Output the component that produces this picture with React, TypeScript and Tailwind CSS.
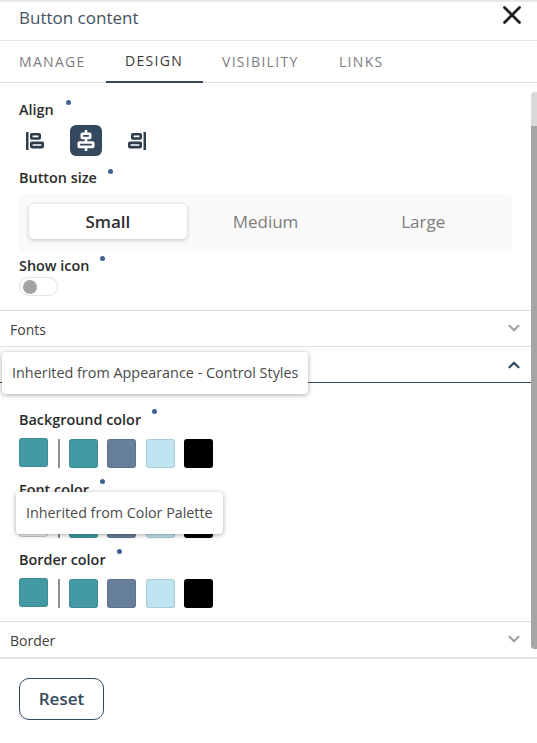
import React from 'react';
import { X, ChevronDown, ChevronUp } from 'lucide-react';

const swatches = ['bg-[#439aa3]', 'bg-[#687f9b]', 'bg-[#bfe3ef]', 'bg-[#000000]'];

function Label({ text, dotClass }: { text: string; dotClass: string }) {
  return (
    <div className="relative h-[20px] text-[14.4px] leading-[20px] font-semibold text-[#2b2b2b]">
      {text}
      <span className={`absolute w-[5px] h-[5px] rounded-full bg-[#3f6391] ${dotClass}`}></span>
    </div>
  );
}

function AlignLeftIcon() {
  return (
    <svg width="18" height="20" viewBox="0 0 18 20" fill="none" stroke="#2e3d4c" strokeWidth="2.6">
      <path d="M1.2 1v18" />
      <rect x="5.3" y="3.3" width="8.4" height="4.2" rx="0.5" />
      <rect x="5.3" y="11.9" width="11.4" height="4.2" rx="0.5" />
    </svg>
  );
}

function AlignCenterIcon() {
  return (
    <svg width="18" height="22" viewBox="0 0 18 22" fill="none" stroke="#ffffff" strokeWidth="2.6">
      <path d="M9 0v3M9 9v3M9 18v3" />
      <rect x="4.8" y="3.8" width="8.4" height="4.2" rx="0.5" />
      <rect x="1.8" y="12.5" width="14.4" height="4.4" rx="0.5" />
    </svg>
  );
}

function AlignRightIcon() {
  return (
    <svg width="18" height="20" viewBox="0 0 18 20" fill="none" stroke="#2e3d4c" strokeWidth="2.6">
      <path d="M16.8 1v18" />
      <rect x="4.3" y="3.3" width="8.4" height="4.2" rx="0.5" />
      <rect x="1.3" y="11.9" width="11.4" height="4.2" rx="0.5" />
    </svg>
  );
}

function ColorRow({ first, firstBorder }: { first: string; firstBorder: string }) {
  return (
    <div className="flex items-start h-[30px]">
      <div className={`w-[29px] h-[29px] rounded-[3px] border ${first} ${firstBorder}`}></div>
      <div className="w-[2px] h-[29px] mt-px ml-[10px] mr-[9px] bg-[#8f8f8f]"></div>
      <div className="flex mt-px gap-[9.3px]">
        {swatches.map((s, i) => (
          <div key={i} className={`w-[29px] h-[29px] rounded-[3px] border border-black/10 ${s}`}></div>
        ))}
      </div>
    </div>
  );
}

function AccordionRow({ title }: { title: string }) {
  return (
    <div className="h-[36px] border-b border-[#dedede] flex items-center justify-between pl-[10px] pr-[14px] text-[14px] text-[#3d3d3d]">
      <span className="pt-[2px]">{title}</span>
      <ChevronDown className="w-[18px] h-[18px] text-[#a3a3a3] -mt-[2px]" strokeWidth={3} />
    </div>
  );
}

export default function App() {
  return (
    <div className="relative w-[537px] h-[743px] overflow-hidden bg-white font-['Open_Sans',sans-serif] flex flex-col">
      {/* Header */}
      <div className="h-[41px] shrink-0 border-b border-t-2 border-b-[#e6e6e6] border-t-[#e8e8e8] flex items-start justify-between pl-[19px] pr-[10px]">
        <span className="text-[17px] leading-[32px] text-[#44525f]">Button content</span>
        <X className="w-[30px] h-[30px] text-[#1f1f1f] -mt-[2px]" strokeWidth={2.2} />
      </div>

      {/* Tabs */}
      <div className="h-[42px] shrink-0 border-b border-[#dedede] flex pl-[19px] text-[14px] tracking-[1.3px] text-[#7d7d7d]">
        <div className="w-[87px] leading-[42px]">MANAGE</div>
        <div className="w-[97px] -mb-px pl-[19px] leading-[40px] text-[#3a3a3a] border-b-2 border-[#34495e]">DESIGN</div>
        <div className="ml-[19px] w-[117px] leading-[42px]">VISIBILITY</div>
        <div className="leading-[42px]">LINKS</div>
      </div>

      {/* Panel body */}
      <div className="relative flex-1 min-h-0 flex flex-col">
        <div className="h-[228px] shrink-0 border-b border-[#dedede] pl-[19px] pr-[25px] pt-[17px] flex flex-col">
          <Label text="Align" dotClass="left-[47px] top-0" />
          <div className="flex items-center h-[31px] mt-[5px]">
            <div className="w-[32px] flex justify-start pl-[7px]"><AlignLeftIcon /></div>
            <div className="ml-[19px] w-[32px] h-[31px] rounded-[6px] bg-[#34495e] flex items-center justify-center"><AlignCenterIcon /></div>
            <div className="ml-[26px]"><AlignRightIcon /></div>
          </div>
          <div className="mt-[12px]"><Label text="Button size" dotClass="left-[89px] top-px" /></div>
          <div className="mt-[6px] h-[58px] w-[493px] rounded-[6px] bg-[#fafafa] flex items-start pt-[10px] px-[10px] text-[17px] text-[#7d7d7d]">
            <div className="w-[158px] h-[35px] rounded-[5px] bg-white shadow-[0_1px_4px_rgba(0,0,0,0.22)] flex items-center justify-center font-semibold text-[#2f2f2f]">Small</div>
            <div className="w-[158px] h-[35px] flex items-center justify-center">Medium</div>
            <div className="w-[158px] h-[35px] flex items-center justify-center">Large</div>
          </div>
          <div className="mt-[4px]"><Label text="Show icon" dotClass="left-[81px] top-0" /></div>
          <div className="mt-px w-[39px] h-[19px] rounded-full border border-[#e4e4e4] bg-white flex items-center pl-[3px]">
            <div className="w-[14px] h-[14px] rounded-full bg-[#a3a3a3]"></div>
          </div>
        </div>

        <AccordionRow title="Fonts" />

        {/* Title of this row is covered by the tooltip in the picture */}
        <div className="h-[36px] shrink-0 border-b border-[#34495e] flex items-center justify-end pr-[14px]">
          <ChevronUp className="w-[18px] h-[18px] text-[#34495e]" strokeWidth={3} />
        </div>

        <div className="h-[239px] shrink-0 border-b border-[#dedede] pl-[19px] pt-[27px]">
          <Label text="Background color" dotClass="left-[133px] top-[-1px]" />
          <div className="mt-[8px]"><ColorRow first="bg-[#439aa3]" firstBorder="border-black/10" /></div>
          <div className="mt-[12px]"><Label text="Font color" dotClass="left-[81px] top-[-1px]" /></div>
          <div className="mt-[8px]"><ColorRow first="bg-[#f2f2f2]" firstBorder="border-[#c8c8c8]" /></div>
          <div className="mt-[12px]"><Label text="Border color" dotClass="left-[98px] top-[-1px]" /></div>
          <div className="mt-[8px]"><ColorRow first="bg-[#439aa3]" firstBorder="border-black/10" /></div>
        </div>

        <AccordionRow title="Border" />

        {/* Footer */}
        <div className="pl-[19px] pt-[19px] border-t border-[#e8e8e8]">
          <button className="w-[85px] h-[42px] rounded-[10px] border border-[#34495e] bg-white text-[17px] font-semibold text-[#34495e]">Reset</button>
        </div>

        {/* Scrollbar */}
        <div className="absolute right-0 top-[9px] w-[6px] h-[557px] rounded-l-[4px] bg-[#d9d9d9]">
          <div className="absolute left-0 right-0 top-[34px] bottom-0 rounded-bl-[4px] bg-[#a6a6a6]"></div>
        </div>

        {/* Tooltips */}
        <div className="absolute left-[2px] top-[269px] w-[306px] h-[42px] rounded-[4px] bg-white shadow-[0_1px_5px_rgba(0,0,0,0.35)] flex items-center pl-[10px] pb-px text-[14.4px] text-[#4a4a4a]">
          Inherited from Appearance - Control Styles
        </div>
        <div className="absolute left-[16px] top-[409px] w-[207px] h-[42px] rounded-[4px] bg-white shadow-[0_1px_5px_rgba(0,0,0,0.35)] flex items-center pl-[10px] pb-px text-[14.3px] text-[#4a4a4a]">
          Inherited from Color Palette
        </div>
      </div>
    </div>
  );
}
